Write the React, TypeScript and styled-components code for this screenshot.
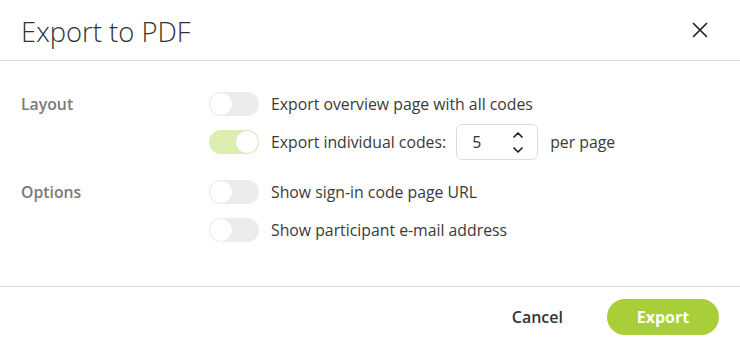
import { FC, ReactNode, useState } from "react";

import styled, { createGlobalStyle } from "styled-components";

const GlobalStyle = createGlobalStyle`
  html, body {
    margin: 0;
    padding: 0;
    background: #fff;
  }

  body {
    font-family: "Open Sans", "Liberation Sans", sans-serif;
    color: #333;
  }
`;

const Dialog = styled.div`
  width: 740px;
  height: 347px;
  display: flex;
  flex-direction: column;
  background: #fff;
`;

const Header = styled.header`
  height: 60px;
  display: flex;
  align-items: center;
  justify-content: space-between;
  padding: 0 21px;
  border-bottom: 1px solid #d9d9d9;
  box-sizing: content-box;
`;

const Title = styled.h1`
  margin: 0;
  font-size: 27.4px;
  font-weight: 300;
  color: #333;
  position: relative;
  top: 1px;
`;

const CloseButton = styled.button`
  width: 30px;
  height: 30px;
  display: flex;
  align-items: center;
  justify-content: center;
  border: 0;
  background: none;
  padding: 0;
  margin-right: 4px;
  cursor: pointer;
`;

const Body = styled.section`
  flex: 1;
  padding: 24px 21px 0;
  display: flex;
  flex-direction: column;
  gap: 12px;
`;

const Section = styled.div`
  display: grid;
  grid-template-columns: 188px 1fr;
`;

const SectionLabel = styled.div`
  height: 38px;
  display: flex;
  align-items: center;
  font-size: 15.8px;
  font-weight: 600;
  color: #7a7a7a;
`;

const OptionList = styled.div`
  display: flex;
  flex-direction: column;
`;

const OptionRow = styled.label`
  height: 38px;
  display: flex;
  align-items: center;
  gap: 12px;
  font-size: 15.8px;
  color: #3a3a3a;
`;

const Track = styled.span<{ $on: boolean }>`
  width: 50px;
  height: 24px;
  border-radius: 12px;
  background: ${({ $on }) => ($on ? "#dcedb0" : "#ececec")};
  position: relative;
  flex-shrink: 0;
  cursor: pointer;
`;

const Knob = styled.span<{ $on: boolean }>`
  position: absolute;
  top: 1px;
  left: ${({ $on }) => ($on ? "27px" : "1px")};
  width: 22px;
  height: 22px;
  border-radius: 50%;
  background: #fff;
  box-shadow: 0 0 1px rgba(0, 0, 0, 0.08);
`;

const NumberBox = styled.div`
  width: 51px;
  height: 34px;
  border: 1px solid #dcdcdc;
  border-radius: 6px;
  display: flex;
  align-items: center;
  justify-content: space-between;
  padding: 0 14px 0 15px;
  box-sizing: content-box;
  margin-left: -2px;
`;

const NumberValue = styled.span`
  font-size: 15.8px;
  color: #333;
`;

const Spinner = styled.div`
  display: flex;
  flex-direction: column;
  gap: 9px;
`;

const Footer = styled.footer`
  height: 60px;
  border-top: 1px solid #d9d9d9;
  display: flex;
  align-items: center;
  justify-content: flex-end;
  gap: 44px;
  padding: 0 21px;
`;

const TextButton = styled.button`
  border: 0;
  background: none;
  font-family: inherit;
  font-size: 16px;
  font-weight: 600;
  color: #333;
  padding: 0;
  cursor: pointer;
`;

const PrimaryButton = styled.button`
  width: 112px;
  height: 36px;
  border: 0;
  border-radius: 18px;
  background: #a8cf3a;
  color: #fff;
  font-family: inherit;
  font-size: 16px;
  font-weight: 700;
  cursor: pointer;
`;

const Toggle: FC<{ on: boolean; onChange: () => void }> = ({ on, onChange }) => (
  <Track $on={on} onClick={onChange}>
    <Knob $on={on} />
  </Track>
);

const Option: FC<{
  on: boolean;
  onChange: () => void;
  children: ReactNode;
}> = ({ on, onChange, children }) => (
  <OptionRow>
    <Toggle on={on} onChange={onChange} />
    {children}
  </OptionRow>
);

const Chevron = ({ up }: { up?: boolean }) => (
  <svg width="10" height="6" viewBox="0 0 10 6" fill="none" display="block">
    <path
      d={up ? "M1 5 L5 1 L9 5" : "M1 1 L5 5 L9 1"}
      stroke="#222"
      strokeWidth="1.7"
      strokeLinecap="round"
      strokeLinejoin="round"
    />
  </svg>
);

const App = () => {
  const [state, setState] = useState({
    overview: false,
    individual: true,
    signIn: false,
    email: false,
  });

  const flip = (key: keyof typeof state) => () =>
    setState((s) => ({ ...s, [key]: !s[key] }));

  return (
    <>
      <GlobalStyle />
      <Dialog role="dialog">
        <Header>
          <Title>Export to PDF</Title>
          <CloseButton aria-label="Close">
            <svg width="16" height="16" viewBox="0 0 16 16" fill="none">
              <path
                d="M1.5 1.5 L14.5 14.5 M14.5 1.5 L1.5 14.5"
                stroke="#222"
                strokeWidth="1.7"
                strokeLinecap="round"
              />
            </svg>
          </CloseButton>
        </Header>

        <Body>
          <Section>
            <SectionLabel>Layout</SectionLabel>
            <OptionList>
              <Option on={state.overview} onChange={flip("overview")}>
                Export overview page with all codes
              </Option>
              <Option on={state.individual} onChange={flip("individual")}>
                Export individual codes:
                <NumberBox>
                  <NumberValue>5</NumberValue>
                  <Spinner>
                    <Chevron up />
                    <Chevron />
                  </Spinner>
                </NumberBox>
                per page
              </Option>
            </OptionList>
          </Section>

          <Section>
            <SectionLabel>Options</SectionLabel>
            <OptionList>
              <Option on={state.signIn} onChange={flip("signIn")}>
                Show sign-in code page URL
              </Option>
              <Option on={state.email} onChange={flip("email")}>
                Show participant e-mail address
              </Option>
            </OptionList>
          </Section>
        </Body>

        <Footer>
          <TextButton>Cancel</TextButton>
          <PrimaryButton>Export</PrimaryButton>
        </Footer>
      </Dialog>
    </>
  );
};

export default App;
